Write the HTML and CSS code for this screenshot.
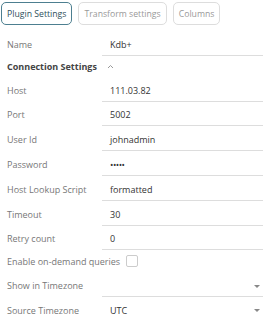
FILE: index.html
```html
<!DOCTYPE html>
<html lang="en">
<head>
  <meta charset="UTF-8" />
  <title>Plugin Settings</title>
  <link rel="stylesheet" href="styles.css">
</head>
<body>
  <nav class="tabs">
    <button class="tab active">Plugin Settings</button>
    <button class="tab">Transform settings</button>
    <button class="tab">Columns</button>
  </nav>
  <form class="settings">
    <div class="row">
      <span class="label">Name</span>
      <span class="value">Kdb+</span>
    </div>
    <div class="section">
      <span class="section-title">Connection Settings</span>
      <svg class="collapse" width="7" height="5" viewBox="0 0 7 5"><path d="M1 4 L3.5 1.5 L6 4" fill="none" stroke="#999" stroke-width="1"/></svg>
    </div>
    <div class="row">
      <span class="label">Host</span>
      <span class="value">111.03.82</span>
    </div>
    <div class="row">
      <span class="label">Port</span>
      <span class="value">5002</span>
    </div>
    <div class="row">
      <span class="label">User Id</span>
      <span class="value">johnadmin</span>
    </div>
    <div class="row">
      <span class="label">Password</span>
      <span class="value password">&bull;&bull;&bull;&bull;&bull;</span>
    </div>
    <div class="row">
      <span class="label">Host Lookup Script</span>
      <span class="value">formatted</span>
    </div>
    <div class="row">
      <span class="label">Timeout</span>
      <span class="value">30</span>
    </div>
    <div class="row">
      <span class="label">Retry count</span>
      <span class="value">0</span>
    </div>
    <div class="check-row">
      <span class="label-inline">Enable on-demand queries</span>
      <span class="checkbox"></span>
    </div>
    <div class="row">
      <span class="label">Show in Timezone</span>
      <span class="value select"><span></span><i class="arrow"></i></span>
    </div>
    <div class="row">
      <span class="label">Source Timezone</span>
      <span class="value select"><span>UTC</span><i class="arrow"></i></span>
    </div>
  </form>
</body>
</html>
```

FILE: styles.css
```css
body {
  margin: 0;
  padding: 2px 1px;
  font-family: "Open Sans", sans-serif;
  font-size: 9px;
  color: #333;
  background: #fff;
}
.tabs {
  display: flex;
  gap: 6px;
  height: 23px;
}
.tab {
  font-family: inherit;
  font-size: 8.7px;
  padding: 0 5px;
  background: #fff;
  color: #999;
  border: 1px solid #ddd;
  border-radius: 5px;
}
.tab.active {
  color: #2f4f5c;
  border-color: #4d7f90;
}
.settings {
  margin-top: 6px;
}
.row {
  display: flex;
  align-items: flex-end;
  height: 24.8px;
}
.label {
  width: 95px;
  padding-left: 6px;
  padding-bottom: 4px;
  color: #777;
  line-height: 14px;
}
.value {
  flex: 1;
  margin-right: 6px;
  padding: 0 0 3px 8px;
  line-height: 14px;
  height: 14px;
  border-bottom: 1px solid #ddd;
  color: #333;
}
.password {
  letter-spacing: -0.5px;
}
.select {
  display: flex;
  justify-content: space-between;
  align-items: center;
}
.arrow {
  width: 0;
  height: 0;
  margin-right: 3px;
  border-left: 3px solid transparent;
  border-right: 3px solid transparent;
  border-top: 3px solid #888;
}
.section {
  display: flex;
  align-items: center;
  height: 21px;
  padding-left: 6px;
}
.section-title {
  font-weight: bold;
  color: #444;
  white-space: nowrap;
}
.collapse {
  margin-left: 10px;
}
.check-row {
  display: flex;
  align-items: center;
  height: 22px;
  padding-left: 6px;
}
.label-inline {
  color: #777;
}
.checkbox {
  width: 12px;
  height: 12px;
  margin-left: 6px;
  border: 1px solid #ccc;
  border-radius: 2px;
  box-sizing: border-box;
}
```
